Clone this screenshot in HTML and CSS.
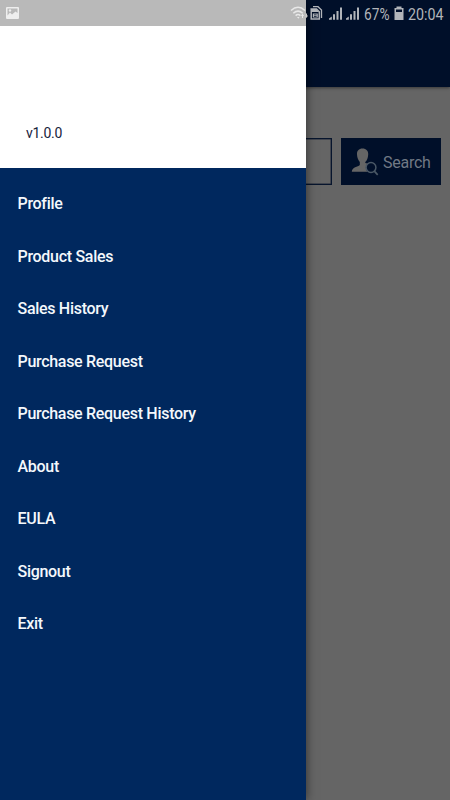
FILE: index.html
```html
<!DOCTYPE html>
<html lang="en">
<head>
<meta charset="utf-8">
<title>Menu</title>
<link rel="stylesheet" href="styles.css">
</head>
<body>
<div class="screen">
  <main class="page">
    <header class="toolbar"></header>
    <div class="search-row">
      <div class="search-field"></div>
      <div class="search-button">
        <svg class="user-icon" width="28" height="28" viewBox="0 0 28 28">
          <path fill="#656565" d="M11.500 .5C7.800 .5 5.700 3 6 6.500C6.100 9.500 7.300 12.500 8.800 14V17C7 19.200 .9 18.800 .8 23.800H16.500C14.300 21 14.500 17.500 17 15.800L14.300 15V14C16 12.500 17 10 17.200 6.500C17.400 3 15.200 .5 11.500 .5Z"/>
          <circle cx="20" cy="19.500" r="4.900" fill="#000f29" stroke="#4a5866" stroke-width="1.500"/>
          <path d="M23.300 23.200L26.700 26.900" stroke="#4a5866" stroke-width="1.700"/>
        </svg>
        <span>Search</span>
      </div>
    </div>
  </main>
  <aside class="drawer">
    <div class="drawer-header"><span>v1.0.0</span></div>
    <nav class="menu">
      <a>Profile</a>
      <a>Product Sales</a>
      <a>Sales History</a>
      <a>Purchase Request</a>
      <a>Purchase Request History</a>
      <a>About</a>
      <a>EULA</a>
      <a>Signout</a>
      <a>Exit</a>
    </nav>
  </aside>
  <div class="status-bar">
    <svg width="450" height="26" viewBox="0 0 450 26">
      <path fill="#eee" fill-rule="evenodd" d="M7 7H18Q19 7 19 8V18Q19 19 18 19H7Q6 19 6 18V8Q6 7 7 7ZM7.500 8.500V15.500L10 12.500L12 14.500L15.500 11.500L17.500 13V8.500Z"/>
      <circle cx="10" cy="10.500" r="1.200" fill="#eee"/>
      <path fill="none" stroke="#e8e8e8" stroke-width="1.500" d="M291 10.500Q298 4 305 10.500M293.300 13.200Q298 9 302.700 13.200M295.600 15.600Q298 13.500 300.400 15.600"/>
      <path d="M297 17H299.500L298.300 18.800Z" fill="#e8e8e8"/>
      <path d="M302.500 13.500L304 16H303V18H302V16H301Z" fill="#e8e8e8"/>
      <path d="M306 13.500H307V15.500H308L306.500 18L305 15.500H306Z" fill="#ccc"/>
      <path d="M313 6.700H318L321.500 10V18" fill="none" stroke="#b2b5ba" stroke-width="1.300"/>
      <path d="M311.200 9H316.500L319.300 11.800V19H311.200Z" fill="none" stroke="#b2b5ba" stroke-width="1.500"/>
      <path fill="#b2b5ba" d="M311 9H316.500L319 12H311ZM312.800 13.500H317.800V17.500H312.800Z"/>
      <path fill="#000f29" d="M314 14.500H316.600V15.300H314ZM314 16H316.600V16.700H314Z"/>
      <g fill="#b2b5ba">
        <path id="bars" d="M329 19.800V18.500L331.800 16.500V19.800ZM333 19.800V14.300H335V19.800ZM336.500 19.800V11H338.500V19.800ZM340 19.800V7.500H342V19.800Z"/>
        <use href="#bars" x="17"/>
        <path fill-rule="evenodd" d="M396.500 6.500H401.500V8H403.500V20H394.500V8H396.500ZM396 9.500V12H402V9.500Z"/>
      </g>
      <text x="364" y="20" textLength="25.500" lengthAdjust="spacingAndGlyphs">67%</text>
      <text x="408" y="20" textLength="35.500" lengthAdjust="spacingAndGlyphs">20:04</text>
    </svg>
  </div>
</div>
</body>
</html>
```
FILE: styles.css
```css
* { box-sizing: border-box; }
body { margin: 0; font-family: Roboto, "Liberation Sans", sans-serif; }
.screen {
  position: relative;
  width: 450px;
  height: 800px;
  overflow: hidden;
  background: #656565;
}
.toolbar {
  height: 87px;
  background: #000f29;
  box-shadow: 0 1px 3px rgba(0, 0, 0, .45);
}
.search-row {
  display: flex;
  justify-content: flex-end;
  gap: 9px;
  padding: 51px 9px 0 0;
}
.search-field {
  width: 300px;
  height: 47px;
  border: 1px solid #07152d;
  box-shadow: inset 0 0 0 .5px #20293a;
}
.search-button {
  display: flex;
  align-items: center;
  width: 100px;
  height: 47px;
  padding-left: 10px;
  gap: 4px;
  background: #000f29;
  color: #717985;
  font-size: 16px;
  letter-spacing: -.25px;
}
.search-button span { position: relative; top: 1px; }
.user-icon { flex: none; }
.drawer {
  position: absolute;
  top: 0;
  left: 0;
  width: 306px;
  height: 800px;
  background: #00285e;
  box-shadow: 0 0 10px rgba(0, 0, 0, .55);
}
.drawer-header {
  height: 168px;
  padding: 124px 0 0 26px;
  background: #fff;
  color: #17233c;
  font-size: 14px;
  letter-spacing: -.3px;
  line-height: 18px;
}
.menu {
  display: flex;
  flex-direction: column;
  padding: 10px 0 0 17.5px;
}
.menu a {
  height: 52.5px;
  line-height: 52.5px;
  color: #f4f8fc;
  font-size: 16px;
  font-weight: 500;
  letter-spacing: -.3px;
}
.status-bar {
  position: absolute;
  top: 0;
  left: 0;
  width: 450px;
  height: 26px;
  background: linear-gradient(90deg, #b9b9b9 306px, transparent 306px);
}
.status-bar svg { display: block; }
.status-bar text { fill: #b2b5ba; font-size: 17px; }
```
